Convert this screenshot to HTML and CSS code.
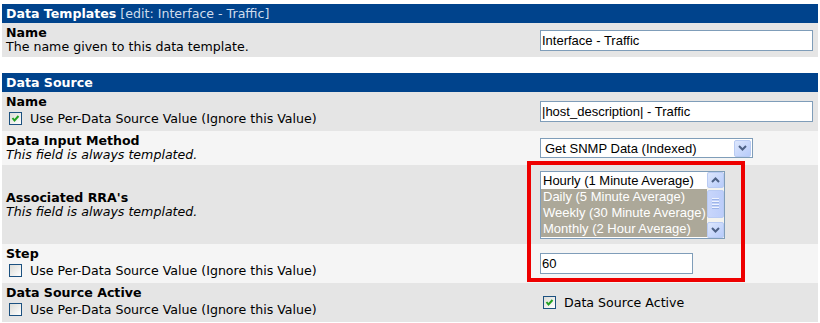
FILE: index.html
```html
<!DOCTYPE html>
<html lang="en">
<head>
    <meta charset="UTF-8">
    <title>Data Templates - Edit</title>
    <link rel="stylesheet" href="styles.css">
</head>
<body>

<div class="page">
    <div class="panel">
        <div class="panelHeader"><strong>Data Templates</strong> <span class="headerNote">[edit: Interface - Traffic]</span></div>
        <div class="formRow rowDark">
            <div class="fieldLabel">
                <div class="fieldTitle">Name</div>
                <div class="fieldDesc">The name given to this data template.</div>
            </div>
            <div class="fieldValue">
                <input type="text" class="textField wideField" value="Interface - Traffic">
            </div>
        </div>
    </div>

    <div class="panel">
        <div class="panelHeader"><strong>Data Source</strong></div>

        <div class="formRow rowDark">
            <div class="fieldLabel">
                <div class="fieldTitle">Name</div>
                <div class="checkLine"><span class="checkBox checked"></span>Use Per-Data Source Value (Ignore this Value)</div>
            </div>
            <div class="fieldValue">
                <input type="text" class="textField wideField" value="|host_description| - Traffic">
            </div>
        </div>

        <div class="formRow rowLight">
            <div class="fieldLabel">
                <div class="fieldTitle">Data Input Method</div>
                <div class="fieldDesc templated">This field is always templated.</div>
            </div>
            <div class="fieldValue">
                <div class="dropDown">
                    <span class="dropText">Get SNMP Data (Indexed)</span>
                    <span class="dropButton">
                        <svg width="9" height="6" viewBox="0 0 9 6"><path d="M1 1 L4.5 4.5 L8 1" fill="none" stroke="#4d6185" stroke-width="2"/></svg>
                    </span>
                </div>
            </div>
        </div>

        <div class="formRow rowDark rraRow">
            <div class="fieldLabel">
                <div class="fieldTitle">Associated RRA's</div>
                <div class="fieldDesc templated">This field is always templated.</div>
            </div>
            <div class="fieldValue">
                <div class="listBox">
                    <div class="listItems">
                        <div class="listItem">Hourly (1 Minute Average)</div>
                        <div class="listItem selected">Daily (5 Minute Average)</div>
                        <div class="listItem selected">Weekly (30 Minute Average)</div>
                        <div class="listItem selected">Monthly (2 Hour Average)</div>
                    </div>
                    <div class="scrollBar">
                        <span class="scrollButton">
                            <svg width="9" height="6" viewBox="0 0 9 6"><path d="M1 5 L4.5 1.5 L8 5" fill="none" stroke="#4d6185" stroke-width="2"/></svg>
                        </span>
                        <div class="scrollTrack">
                            <span class="scrollThumb"><i></i><i></i><i></i><i></i></span>
                        </div>
                        <span class="scrollButton">
                            <svg width="9" height="6" viewBox="0 0 9 6"><path d="M1 1 L4.5 4.5 L8 1" fill="none" stroke="#4d6185" stroke-width="2"/></svg>
                        </span>
                    </div>
                </div>
            </div>
        </div>

        <div class="formRow rowLight">
            <div class="fieldLabel">
                <div class="fieldTitle">Step</div>
                <div class="checkLine"><span class="checkBox"></span>Use Per-Data Source Value (Ignore this Value)</div>
            </div>
            <div class="fieldValue">
                <input type="text" class="textField stepField" value="60">
            </div>
        </div>

        <div class="formRow rowDark">
            <div class="fieldLabel">
                <div class="fieldTitle">Data Source Active</div>
                <div class="checkLine"><span class="checkBox"></span>Use Per-Data Source Value (Ignore this Value)</div>
            </div>
            <div class="fieldValue">
                <div class="checkLine valueCheck"><span class="checkBox checked"></span>Data Source Active</div>
            </div>
        </div>
    </div>

    <!-- annotation drawn over the screenshot -->
    <div class="highlight"></div>
</div>

</body>
</html>
```

FILE: styles.css
```css
body {
    margin: 0;
    padding: 0;
    background: #ffffff;
    font-family: "DejaVu Sans", Verdana, sans-serif;
    font-size: 12.6px;
    color: #000000;
}

.page {
    position: relative;
    padding: 4px 2px 0 2px;
}

.panel {
    margin-bottom: 16px;
}

.panelHeader {
    background: #00438c;
    color: #ffffff;
    height: 19px;
    line-height: 19px;
    padding: 0 4px;
}

.headerNote {
    color: #cfdcec;
}

.formRow {
    display: grid;
    grid-template-columns: 1fr 281px;
    align-items: center;
}

.rowDark {
    background: #e5e5e5;
}

.rowLight {
    background: #f5f5f5;
}

.fieldLabel {
    padding: 3px 4px;
}

.fieldTitle {
    font-weight: bold;
    line-height: 14px;
}

.fieldDesc {
    line-height: 14px;
}

.templated {
    font-style: italic;
}

.checkLine {
    display: flex;
    align-items: center;
    height: 19px;
    padding-left: 3px;
}

.checkBox {
    box-sizing: border-box;
    width: 13px;
    height: 13px;
    border: 1px solid #1c5180;
    background: linear-gradient(135deg, #dcdcd7, #ffffff);
    margin-right: 8px;
    flex-shrink: 0;
}

.checkBox.checked {
    background:
        url("data:image/svg+xml,%3Csvg xmlns='http://www.w3.org/2000/svg' width='11' height='11'%3E%3Cpath d='M2.5 5 L4.5 7.5 L8.5 3' fill='none' stroke='%2321a121' stroke-width='2'/%3E%3C/svg%3E") no-repeat center,
        linear-gradient(135deg, #dcdcd7, #ffffff);
}

.fieldValue {
    padding: 3px 0 3px 3px;
}

.textField {
    box-sizing: border-box;
    height: 21px;
    border: 1px solid #7f9db9;
    background: #ffffff;
    font-family: "Liberation Sans", Arial, sans-serif;
    font-size: 13px;
    padding: 0 1px;
    margin: 0;
    outline: none;
}

.wideField {
    width: 273px;
}

.stepField {
    width: 153px;
}

.dropDown {
    box-sizing: border-box;
    width: 213px;
    height: 20px;
    border: 1px solid #7f9db9;
    background: #ffffff;
    display: flex;
    align-items: center;
    justify-content: space-between;
    font-family: "Liberation Sans", Arial, sans-serif;
    font-size: 13px;
}

.dropText {
    padding-left: 4px;
}

.dropButton,
.scrollButton {
    box-sizing: border-box;
    width: 17px;
    height: 17px;
    margin-right: 1px;
    border: 1px solid #b9cbf3;
    border-radius: 2px;
    background: linear-gradient(135deg, #dde7fd, #b7cbfa);
    display: flex;
    align-items: center;
    justify-content: center;
}

.rraRow {
    height: 79px;
}

.listBox {
    box-sizing: border-box;
    width: 185px;
    height: 68px;
    border: 1px solid #7f9db9;
    background: #ffffff;
    display: flex;
    font-family: "Liberation Sans", Arial, sans-serif;
    font-size: 13px;
}

.listItems {
    flex: 1;
    padding-top: 1px;
}

.listItem {
    height: 16px;
    line-height: 16px;
    padding-left: 2px;
    white-space: nowrap;
}

.listItem.selected {
    background: #aca899;
    color: #ffffff;
}

.scrollBar {
    width: 17px;
    display: flex;
    flex-direction: column;
    background: #f4f3ee;
}

.scrollBar .scrollButton {
    margin-right: 0;
    height: 16px;
}

.scrollTrack {
    flex: 1;
    padding: 2px 0;
    display: flex;
}

.scrollThumb {
    box-sizing: border-box;
    width: 17px;
    height: 28px;
    border: 1px solid #b9cbf3;
    border-radius: 2px;
    background: linear-gradient(90deg, #c8d6fb, #bccdfa);
    display: flex;
    flex-direction: column;
    align-items: center;
    justify-content: center;
    gap: 1px;
}

.scrollThumb i {
    display: block;
    width: 7px;
    height: 1px;
    background: #eef3fe;
    border-bottom: 1px solid #9db4e8;
}

.valueCheck {
    padding-left: 3px;
}

.highlight {
    position: absolute;
    left: 527px;
    top: 161px;
    width: 210px;
    height: 113px;
    border: 4px solid #ee0000;
}
```
